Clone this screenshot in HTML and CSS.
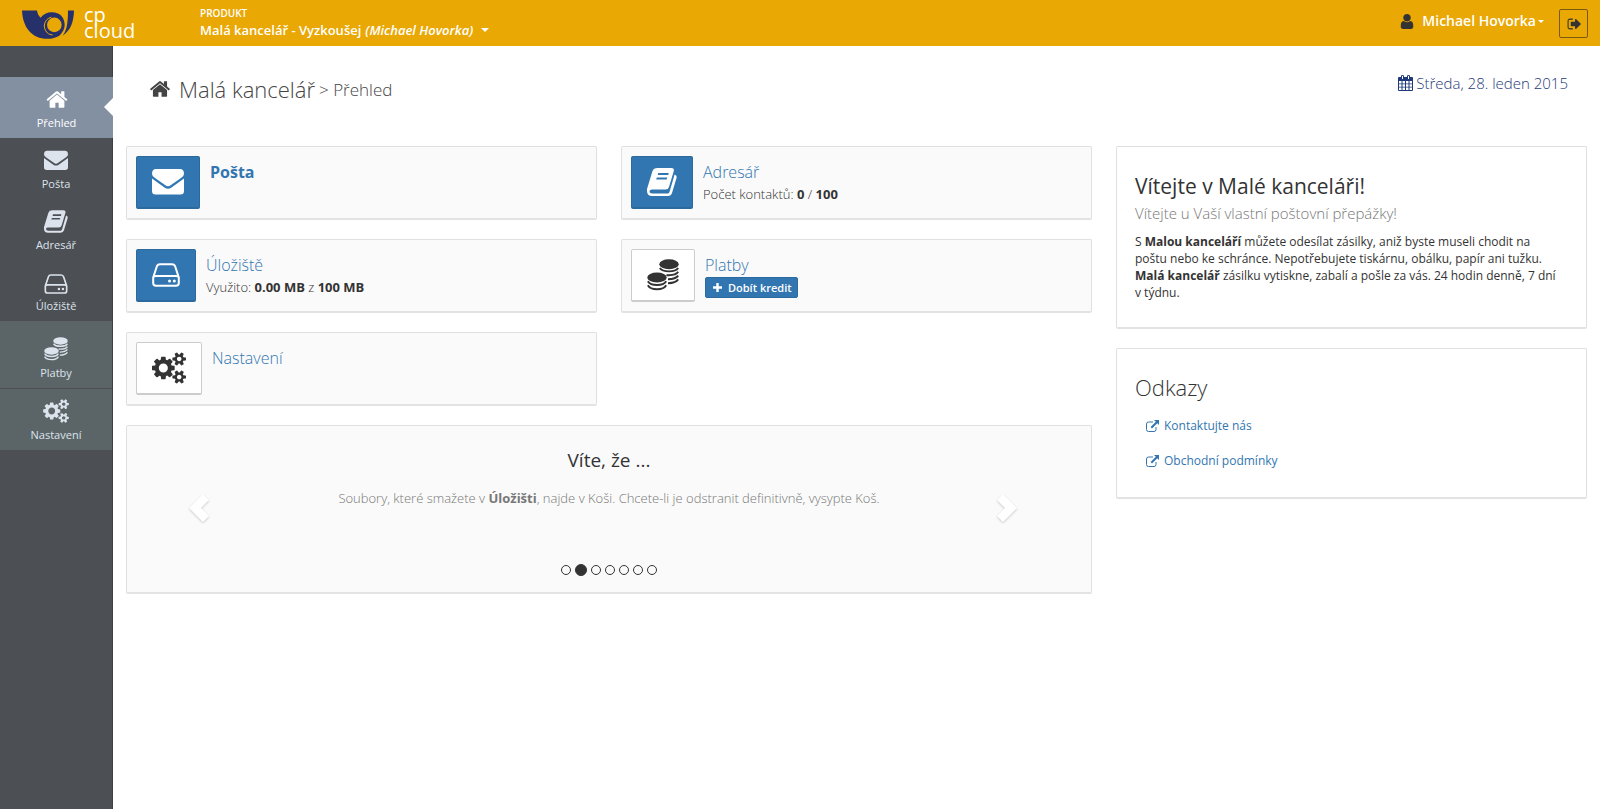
FILE: index.html
```html
<!DOCTYPE html>
<html lang="cs">
<head>
<meta charset="utf-8">
<title>Malá kancelář - Přehled</title>
<link rel="stylesheet" href="styles.css">
</head>
<body>
<svg class="sprite" aria-hidden="true">
  <symbol id="home" viewBox="0 0 1792 1792"><path d="M1472 992v480q0 26-19 45t-45 19h-384v-384h-256v384h-384q-26 0-45-19t-19-45v-480q0-1 .5-3t.5-3l575-474 575 474q1 2 1 6zm223-69l-62 74q-8 9-21 11h-3q-13 0-21-7l-692-577-692 577q-12 8-24 7-13-2-21-11l-62-74q-8-10-7-23.500t11-21.500l719-599q32-26 76-26t76 26l244 204v-195q0-14 9-23t23-9h192q14 0 23 9t9 23v408l219 182q10 8 11 21.500t-7 23.500z"/></symbol>
  <symbol id="mail" viewBox="0 0 32 26"><path d="M0 5Q0 0 4 0H28Q32 0 32 5Q32 7 29 9L19 16Q16 18.500 13 16L3 9Q0 7 0 5ZM0 9.500L12.500 18.500Q16 21 19.500 18.500L32 9.500V22Q32 25.500 28.500 25.500H3.500Q0 25.500 0 22Z"/></symbol>
  <symbol id="book" viewBox="0 0 30 28"><path fill-rule="evenodd" d="M10.500 0H24.500Q27.500 0 26.800 3L22 19Q21.300 21.500 18.500 21.500H5Q3 21.500 2.500 23Q2.500 25.500 5.500 25.500H20.500Q22 25.500 22.500 24L27.600 6.500Q30.300 7.500 29.500 10L25 25Q24 28 21 28H5Q0 28 0 23V21L5.500 3Q6.500 0 10.500 0ZM11.300 5L10.700 7H21.200L21.800 5ZM9.800 9.500L9.200 11.500H19.700L20.300 9.500Z"/></symbol>
  <symbol id="drive" viewBox="0 0 28 24"><path fill="none" stroke="currentColor" stroke-width="2" d="M1.200 14V20Q1.200 22.800 4 22.800H24Q26.800 22.800 26.800 20V14M1.200 14.500L4.800 3.500Q5.500 1.200 8 1.200H20Q22.500 1.200 23.200 3.500L26.800 14.500Q26.500 13 24 13H4Q1.500 13 1.200 14.500"/><circle cx="17.500" cy="18" r="1.500"/><circle cx="22.300" cy="18" r="1.500"/></symbol>
  <symbol id="coins" viewBox="0 0 32 32"><ellipse cx="22" cy="5.200" rx="9.700" ry="5"/><ellipse cx="10" cy="18.500" rx="9.700" ry="5"/><g fill="none" stroke="currentColor" stroke-width="1.900"><path d="M12.800 9Q15 12.400 22 12.400T31.200 9M19.500 16Q20.500 16.200 22 16.200Q29 16.200 31.200 12.800M21 20.200Q28.800 20 31.200 16.600M21 24.200Q28.800 24 31.200 20.400M.8 22.200Q3 26 10 26T19.200 22.200M.8 26.200Q3 30.200 10 30.200T19.200 26.200"/></g></symbol>
  <symbol id="gears" viewBox="0 0 1920 1792"><path d="M896 896q0-106-75-181t-181-75-181 75-75 181 75 181 181 75 181-75 75-181zm768 512q0-52-38-90t-90-38-90 38-38 90q0 53 37.500 90.500t90.500 37.500 90.500-37.500 37.500-90.500zm0-1024q0-52-38-90t-90-38-90 38-38 90q0 53 37.500 90.500t90.500 37.500 90.500-37.500 37.500-90.500zm-384 421v185q0 10-7 19.500t-16 10.500l-155 24q-11 35-32 76 34 48 90 115 7 11 7 20 0 12-7 19-23 30-82.500 89.500t-78.500 59.500q-11 0-21-7l-115-90q-37 19-77 31-11 108-23 155-7 24-30 24h-186q-11 0-20-7.500t-10-17.500l-23-153q-34-10-75-31l-118 89q-7 7-20 7-11 0-21-8-144-133-144-160 0-9 7-19 10-14 41-53t47-61q-23-44-35-82l-152-24q-10-1-17-9.500t-7-19.500v-185q0-10 7-19.500t16-10.500l155-24q11-35 32-76-34-48-90-115-7-11-7-20 0-12 7-20 22-30 82-89t79-59q11 0 21 7l115 90q34-18 77-32 11-108 23-154 7-24 30-24h186q11 0 20 7.500t10 17.500l23 153q34 10 75 31l118-89q8-7 20-7 11 0 21 8 144 133 144 160 0 8-7 19-12 16-42 54t-45 60q23 48 34 82l152 23q10 2 17 10.500t7 19.500zm640 533v140q0 16-149 31-12 27-30 52 51 113 51 138 0 4-4 7-122 71-124 71-8 0-46-47t-52-68q-20 2-30 2t-30-2q-14 21-52 68t-46 47q-2 0-124-71-4-3-4-7 0-25 51-138-18-25-30-52-149-15-149-31v-140q0-16 149-31 13-29 30-52-51-113-51-138 0-4 4-7 4-2 35-20t59-34 30-16q8 0 46 46.500t52 67.500q20-2 30-2t30 2q51-71 92-112l6-2q4 0 124 70 4 3 4 7 0 25-51 138 17 23 30 52 149 15 149 31zm0-1024v140q0 16-149 31-12 27-30 52 51 113 51 138 0 4-4 7-122 71-124 71-8 0-46-47t-52-68q-20 2-30 2t-30-2q-14 21-52 68t-46 47q-2 0-124-71-4-3-4-7 0-25 51-138-18-25-30-52-149-15-149-31v-140q0-16 149-31 13-29 30-52-51-113-51-138 0-4 4-7 4-2 35-20t59-34 30-16q8 0 46 46.500t52 67.500q20-2 30-2t30 2q51-71 92-112l6-2q4 0 124 70 4 3 4 7 0 25-51 138 17 23 30 52 149 15 149 31z"/></symbol>
  <symbol id="user" viewBox="256 128 1280 1536"><path d="M1536 1399q0 109-62.500 187t-150.500 78h-854q-88 0-150.500-78t-62.500-187q0-85 8.500-160.500t31.500-152 58.500-131 94-89 134.500-34.500q131 128 313 128t313-128q76 0 134.500 34.500t94 89 58.500 131 31.500 152 8.500 160.500zm-256-887q0 159-112.500 271.500t-271.500 112.500-271.500-112.500-112.500-271.500 112.500-271.500 271.500-112.500 271.500 112.500 112.500 271.500z"/></symbol>
  <symbol id="exit" viewBox="0 256 1664 1280"><path d="M704 1440q0 4 1 20t.5 26.500-3 23.500-10 19.500-20.500 6.500h-320q-119 0-203.500-84.500t-84.500-203.500v-704q0-119 84.500-203.500t203.500-84.500h320q13 0 22.500 9.500t9.500 22.500q0 4 1 20t.5 26.500-3 23.500-10 19.500-20.500 6.500h-320q-66 0-113 47t-47 113v704q0 66 47 113t113 47h312l11.500 1 11.500 3 8 5.500 7 9 2 13.500zm928-544q0 26-19 45l-544 544q-19 19-45 19t-45-19-19-45v-288h-448q-26 0-45-19t-19-45v-384q0-26 19-45t45-19h448v-288q0-26 19-45t45-19 45 19l544 544q19 19 19 45z"/></symbol>
  <symbol id="calendar" viewBox="0 0 15 16"><path fill-rule="evenodd" d="M1 2H3V1Q3 0 4.500 0T6 1V2H9V1Q9 0 10.500 0T12 1V2H14Q15 2 15 3V15Q15 16 14 16H1Q0 16 0 15V3Q0 2 1 2ZM1 6V8.500H3.500V6ZM4.500 6V8.500H7V6ZM8 6V8.500H10.500V6ZM11.500 6V8.500H14V6ZM1 9.300V11.800H3.500V9.300ZM4.500 9.300V11.800H7V9.300ZM8 9.300V11.800H10.500V9.300ZM11.500 9.300V11.800H14V9.300ZM1 12.600V15H3.500V12.600ZM4.500 12.600V15H7V12.600ZM8 12.600V15H10.500V12.600ZM11.500 12.600V15H14V12.600ZM4 1V4H5V1ZM10 1V4H11V1Z"/></symbol>
  <symbol id="external" viewBox="0 0 13 12"><path fill="none" stroke="currentColor" d="M7 2H2.500Q.5 2 .5 4V9.500Q.5 11.500 2.500 11.500H8Q10 11.500 10 9.500V7"/><path d="M8 0H13V5L11.300 3.300 6 8.500 4.600 7.100 9.800 1.800Z"/></symbol>
  <symbol id="prev" viewBox="0 0 20 28"><path d="M14 0L20 6L12 14L20 22L14 28L0 14Z"/></symbol>
  <symbol id="next" viewBox="0 0 20 28"><path d="M6 0L20 14L6 28L0 22L8 14L0 6Z"/></symbol>
</svg>

<header class="topbar">
  <a class="brand" href="#">
    <svg class="horn" viewBox="0 0 156 86" aria-hidden="true">
      <path d="M0 1H45C46 9 50 17 56 23C63 12 75 6 90 6C114 6 128 22 128 44C128 57 122 66 113 76C101 83 90 86 76 86C30 86 2 52 0 1Z"/>
      <path d="M138 1H156C155 36 146 60 122 77C134 62 138 40 138 1Z"/>
      <circle class="gap" cx="97" cy="44" r="22"/>
      <path class="seam" d="M88 21C66 27 60 52 76 68C80 72 86 74 92 74"/>
    </svg>
    <span class="brand-name"><span>cp</span><span>cloud</span></span>
  </a>
  <button class="product" type="button">
    <span class="product-label">PRODUKT</span>
    <span class="product-name">Malá kancelář - Vyzkoušej <em>(Michael Hovorka)</em><i class="caret"></i></span>
  </button>
  <div class="account">
    <button class="account-name" type="button"><svg class="user-icon"><use href="#user"/></svg><span>Michael Hovorka</span><i class="caret small"></i></button>
    <button class="logout" type="button" aria-label="Odhlásit"><svg><use href="#exit"/></svg></button>
  </div>
</header>

<div class="shell">
  <nav class="sidebar">
    <a class="item active" href="#"><svg><use href="#home"/></svg><span>Přehled</span></a>
    <a class="item" href="#"><svg><use href="#mail"/></svg><span>Pošta</span></a>
    <a class="item" href="#"><svg><use href="#book"/></svg><span>Adresář</span></a>
    <a class="item" href="#"><svg class="drive"><use href="#drive"/></svg><span>Úložiště</span></a>
    <a class="item extra tall" href="#"><svg><use href="#coins"/></svg><span>Platby</span></a>
    <a class="item extra gears" href="#"><svg><use href="#gears"/></svg><span>Nastavení</span></a>
  </nav>

  <main class="content">
    <div class="heading">
      <h1><svg><use href="#home"/></svg>Malá kancelář <span>&gt; Přehled</span></h1>
      <p class="date"><svg><use href="#calendar"/></svg>Středa, 28. leden 2015</p>
    </div>

    <div class="columns">
      <div class="left">
        <section class="card tile">
          <a class="thumb blue" href="#" aria-label="Pošta"><svg class="w32"><use href="#mail"/></svg></a>
          <div><h2><a class="strong" href="#">Pošta</a></h2></div>
        </section>
        <section class="card tile">
          <a class="thumb blue" href="#" aria-label="Adresář"><svg class="w30"><use href="#book"/></svg></a>
          <div><h2><a href="#">Adresář</a></h2><p>Počet kontaktů: <b>0</b> / <b>100</b></p></div>
        </section>
        <section class="card tile">
          <a class="thumb blue" href="#" aria-label="Úložiště"><svg class="w28"><use href="#drive"/></svg></a>
          <div><h2><a href="#">Úložiště</a></h2><p>Využito: <b>0.00 MB</b> z <b>100 MB</b></p></div>
        </section>
        <section class="card tile">
          <a class="thumb" href="#" aria-label="Platby"><svg class="w32"><use href="#coins"/></svg></a>
          <div><h2><a href="#">Platby</a></h2><button class="credit" type="button"><svg viewBox="0 0 9 9"><path d="M3.300 0H5.700V3.300H9V5.700H5.700V9H3.300V5.700H0V3.300H3.300Z"/></svg>Dobít kredit</button></div>
        </section>
        <section class="card tile">
          <a class="thumb" href="#" aria-label="Nastavení"><svg class="w34"><use href="#gears"/></svg></a>
          <div><h2><a href="#">Nastavení</a></h2></div>
        </section>
        <section class="card tips">
          <button class="arrow" type="button" aria-label="Předchozí"><svg><use href="#prev"/></svg></button>
          <div class="tip">
            <h3>Víte, že ...</h3>
            <p>Soubory, které smažete v <b>Úložišti</b>, najde v Koši. Chcete-li je odstranit definitivně, vysypte Koš.</p>
            <div class="dots"><i></i><i class="on"></i><i></i><i></i><i></i><i></i><i></i></div>
          </div>
          <button class="arrow" type="button" aria-label="Další"><svg><use href="#next"/></svg></button>
        </section>
      </div>

      <aside class="right">
        <section class="card panel">
          <h2>Vítejte v Malé kanceláři!</h2>
          <p class="lead">Vítejte u Vaší vlastní poštovní přepážky!</p>
          <p class="text">S <b>Malou kanceláří</b> můžete odesílat zásilky, aniž byste museli chodit na poštu nebo ke schránce. Nepotřebujete tiskárnu, obálku, papír ani tužku. <b>Malá kancelář</b> zásilku vytiskne, zabalí a pošle za vás. 24 hodin denně, 7 dní v&nbsp;týdnu.</p>
        </section>
        <section class="card panel links">
          <h2 class="light">Odkazy</h2>
          <ul>
            <li><a href="#"><svg><use href="#external"/></svg>Kontaktujte nás</a></li>
            <li><a href="#"><svg><use href="#external"/></svg>Obchodní podmínky</a></li>
          </ul>
        </section>
      </aside>
    </div>
  </main>
</div>
</body>
</html>
```
FILE: styles.css
```css
* { box-sizing: border-box; }
body {
  margin: 0;
  min-height: 100vh;
  display: flex;
  flex-direction: column;
  background: #fff;
  color: #333;
  font: 13px/17px "Open Sans", "Noto Sans", sans-serif;
}
h1, h2, h3, p, ul { margin: 0; padding: 0; font-weight: 400; }
ul { list-style: none; }
a { color: #3276b1; text-decoration: none; }
button { font: inherit; border: 0; padding: 0; background: none; cursor: pointer; }
svg { fill: currentColor; flex: none; }
.sprite { position: absolute; width: 0; height: 0; }

.topbar {
  display: flex;
  height: 46px;
  background: #e9a803;
  color: #fff;
}
.brand { display: flex; align-items: flex-start; width: 200px; padding: 10px 0 0 22px; color: #fff; }
.horn { width: 52px; height: 29px; fill: #26316b; }
.horn .gap { fill: #e9a803; }
.horn .seam { fill: none; stroke: #e9a803; stroke-width: 3; }
.brand-name { display: flex; flex-direction: column; margin-left: 10px; font-size: 20px; line-height: 16px; margin-top: -3px; }
.product { display: flex; flex-direction: column; align-items: flex-start; padding-top: 6px; color: #fff; font-weight: 600; }
.product-label { font-size: 10px; line-height: 14px; }
.product-name { display: flex; align-items: center; gap: 4px; line-height: 20px; }
.caret { border: 4px solid transparent; border-top-color: #fff; border-bottom: 0; margin-left: 4px; }
.caret.small { border-width: 3px 3px 0; margin-left: 2px; }
.account { display: flex; align-items: flex-start; margin-left: auto; padding: 9px 12px 0 0; gap: 15px; }
.account-name { display: flex; align-items: center; color: #fff; font-size: 14px; line-height: 24px; font-weight: 600; }
.user-icon { width: 14px; height: 15px; margin-right: 8px; color: #333; }
.logout { display: grid; place-items: center; width: 29px; height: 29px; border: 1px solid #7a5a10; border-radius: 2px; color: #333; }
.logout svg { width: 14px; height: 12px; }

.shell { display: flex; flex: 1; }
.sidebar { width: 113px; flex: none; padding-top: 31px; background: #4c4f53; border-right: 1px solid #3d3f42; }
.item {
  position: relative;
  display: flex;
  flex-direction: column;
  align-items: center;
  gap: 4px;
  padding: 11px 0 7px;
  color: #dce3ed;
  font-size: 11px;
  line-height: 16px;
}
.item svg { width: 24px; height: 23px; }
.item svg.drive { height: 20px; margin: 3px 0 0; }
.item.active { background: #8390a2; color: #fff; margin-right: -1px; }
.item.active::after {
  content: "";
  position: absolute;
  right: 0;
  top: 21px;
  border: 9px solid transparent;
  border-right-color: #fff;
  border-left: 0;
}
.item.extra { background: #5b6567; border-bottom: 1px solid #4c4f53; }
.item.tall { padding-top: 16px; }
.item.tall svg { height: 24px; }
.item.gears { padding-top: 10px; }
.item.gears svg { width: 26px; height: 24px; }

.content { flex: 1; min-width: 0; padding: 0 13px; }
.heading { display: flex; justify-content: space-between; height: 100px; padding: 27px 19px 0 23px; }
h1 { display: flex; align-items: center; height: 32px; font-size: 22px; font-weight: 300; color: #444; }
h1 svg { width: 22px; height: 22px; margin-right: 8px; }
h1 span { margin-left: 4px; font-size: 17px; }
.date { display: flex; align-items: center; gap: 3px; height: 20px; font-size: 15px; font-weight: 300; color: #1f3a7a; }
.date svg { width: 15px; height: 16px; }

.columns { display: grid; gap: 24px; grid-template-columns: repeat(3, minmax(0, 1fr)); align-items: start; }
.left { grid-column: span 2; display: grid; grid-template-columns: 1fr 1fr; gap: 19px 24px; }
.right { display: grid; gap: 19px; }
.card { background: #fff; border: 1px solid #e0e0e0; border-bottom: 2px solid #e3e3e3; border-radius: 2px; }
.tile { display: flex; gap: 10px; padding: 9px; min-height: 74px; background: #fafafa; }
.thumb { display: grid; place-items: center; padding: 0 15px; height: 53px; border: 1px solid #ccc; border-bottom-width: 2px; border-radius: 2px; background: #fff; color: #333; align-self: flex-start; }
.thumb.blue { background: #3276b1; border-color: #2c699d; color: #fff; }
.w34 { width: 34px; height: 32px; }
.w32 { width: 32px; height: 32px; }
.w30 { width: 30px; height: 28px; }
.w28 { width: 28px; height: 24px; }
.tile h2 { padding-top: 4px; font-size: 16px; line-height: 24px; font-weight: 300; }
.tile h2 .strong { font-weight: 700; }
.tile p { line-height: 20px; font-weight: 300; }
.tile b { font-weight: 700; }
.credit { display: flex; align-items: center; gap: 6px; height: 21px; padding: 0 5px 0 7px; background: #3276b1; border: 1px solid #2c699d; border-radius: 2px; color: #fff; font-size: 11px; font-weight: 600; line-height: 18px; }
.credit svg { width: 9px; height: 9px; }

.tips { grid-column: span 2; display: flex; align-items: center; padding: 22px 62px 16px; background: #fafafa; }
.arrow { width: 32px; margin-bottom: 8px; color: #fff; filter: drop-shadow(0 1px 1px rgba(0, 0, 0, .2)); }
.arrow svg { display: block; width: 20px; height: 28px; }
.tip { flex: 1; text-align: center; }
.tip h3 { font-size: 19px; line-height: 24px; }
.tip p { padding-top: 16px; font-size: 13px; line-height: 20px; font-weight: 300; color: #777; }
.tip p b { font-weight: 700; }
.dots { display: flex; justify-content: center; align-items: center; gap: 4px; margin-top: 56px; height: 12px; }
.dots i { width: 10px; height: 10px; border: 1px solid #333; border-radius: 50%; }
.dots .on { width: 12px; height: 12px; background: #333; }

.panel { padding: 24px 18px 26px; }
.panel h2 { font-size: 21px; line-height: 30px; }
.panel h2.light { font-size: 22px; font-weight: 300; }
.panel .text { padding-right: 5px; font-size: 12px; }
.lead { font-size: 15px; line-height: 25px; font-weight: 300; color: #777; padding-bottom: 7px; }
.panel.links { padding-top: 23px; padding-bottom: 25px; }
.links ul { display: grid; gap: 18px; padding: 15px 0 3px 11px; font-size: 12px; }
.links a { display: flex; align-items: center; gap: 5px; }
.links svg { width: 13px; height: 12px; }
```
